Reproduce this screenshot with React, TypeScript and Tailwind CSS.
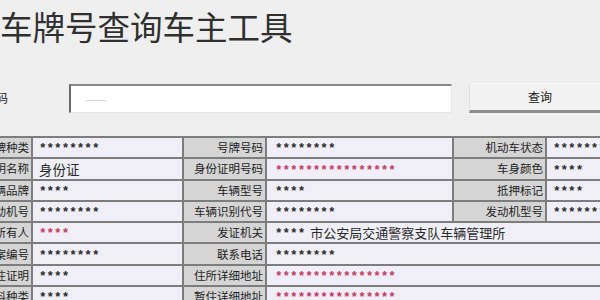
import React from "react";

type Cell = { t: string; kind: "l" | "v"; red?: boolean; big?: boolean; span?: boolean };

const L = (t: string): Cell => ({ t, kind: "l" });
const V = (t: string, o: Partial<Cell> = {}): Cell => ({ t, kind: "v", ...o });

const rows: Cell[][] = [
  [L("号牌种类"), V("********"), L("号牌号码"), V("********"), L("机动车状态"), V("********")],
  [L("证明名称"), V("身份证", { big: true }), L("身份证明号码"), V("****************", { red: true }), L("车身颜色"), V("****")],
  [L("车辆品牌"), V("****"), L("车辆型号"), V("****"), L("抵押标记"), V("****")],
  [L("发动机号"), V("********"), L("车辆识别代号"), V("********"), L("发动机型号"), V("********")],
  [L("所有人"), V("****", { red: true }), L("发证机关"), V("**** 市公安局交通警察支队车辆管理所", { span: true, big: true })],
  [L("档案编号"), V("********"), L("联系电话"), V("********", { span: true })],
  [L("暂住证明"), V("****"), L("住所详细地址"), V("****************", { red: true, span: true })],
  [L("燃料种类"), V("****"), L("暂住详细地址"), V("****************", { red: true, span: true })],
];

const cjk = { fontFamily: '"Noto Sans CJK SC", "Noto Sans", sans-serif' };

function Stars({ s }: { s: string }) {
  return (
    <span className="font-['Liberation_Mono',monospace] text-[12.6px] font-bold inline-block translate-y-[2px]">{s}</span>
  );
}

function renderValue(c: Cell) {
  if (c.big) {
    const m = c.t.match(/^(\*+)\s(.*)$/);
    if (m) {
      return (
        <>
          <Stars s={m[1]} />
          <span className="text-[13px] ml-[5px]" style={cjk}>{m[2]}</span>
        </>
      );
    }
    return <span className="text-[13.5px]" style={cjk}>{c.t}</span>;
  }
  return <Stars s={c.t} />;
}

export default function App() {
  return (
    <div className="w-[600px] h-[300px] overflow-hidden bg-[#efefef] text-[#1a1a1a]" style={cjk}>
      <div className="h-[56px] pt-[8px] text-[32.5px] leading-[36px] text-[#303030] whitespace-nowrap">
        车牌号查询车主工具
      </div>
      <div className="flex items-center h-[30px] mt-[27px]">
        <div className="w-[69px] shrink-0 h-full flex items-center justify-end overflow-hidden">
          <span className="mr-[61px] text-[12px] whitespace-nowrap">车牌号码</span>
        </div>
        <div className="w-[383px] shrink-0 h-[29px] bg-white border-t-2 border-l-2 border-t-[#8a8a8a] border-l-[#6a6a6a] border-r border-b border-r-[#e6e6e6] border-b-[#e6e6e6] flex items-center pl-[14px]">
          <span className="text-[#d2d2d2] text-[13px]">——</span>
        </div>
        <div className="ml-[17px] w-[140px] shrink-0 h-[30px] bg-[#f2f2f2] border-t border-t-[#fafafa] border-l border-l-[#e0e0e0] border-b-[3px] border-b-[#8c8c8c] flex items-center pl-[58px]">
          <span className="text-[12px]">查询</span>
        </div>
      </div>
      <div className="mt-[23px] bg-[#7d7d7d] pt-[2px] grid grid-cols-[31px_149px_81px_185px_91px_1fr] gap-[2px]">
        {rows.map((r, i) =>
          r.map((c, j) => {
            if (c.kind === "l") {
              return (
                <div
                  key={i + "-" + j}
                  className="h-[19.3px] bg-[#d5d5d5] flex items-center justify-end overflow-hidden whitespace-nowrap pr-[2px] text-[11.5px] text-[#1e1e1e]"
                >
                  {c.t}
                </div>
              );
            }
            return (
              <div
                key={i + "-" + j}
                className={
                  "h-[19.3px] bg-[#f0eff8] flex items-center overflow-hidden whitespace-nowrap " +
                  (j === 1 ? "pl-[6px] " : j === 3 ? "pl-[8px] " : "pl-[6px] ") +
                  (c.span ? "col-span-3 " : "") +
                  (c.red ? "text-[#c43a62]" : "text-[#2a2a2a]")
                }
              >
                {renderValue(c)}
              </div>
            );
          })
        )}
      </div>
    </div>
  );
}
